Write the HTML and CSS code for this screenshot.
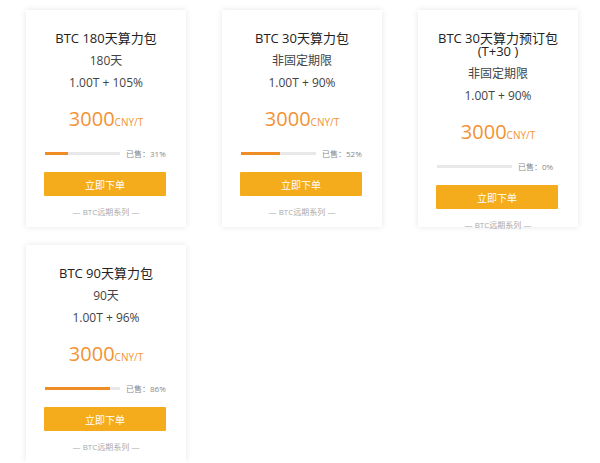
FILE: index.html
```html
<!DOCTYPE html>
<html lang="zh-CN">
<head>
    <meta charset="UTF-8">
    <title>BTC 算力包</title>
    <link rel="stylesheet" href="styles.css">
</head>
<body>
    <div class="list">
        <div class="card">
            <h3 class="title">BTC 180天算力包</h3>
            <p class="sub">180天</p>
            <p class="sub">1.00T + 105%</p>
            <p class="price">3000<span>CNY/T</span></p>
            <div class="progress">
                <div class="track"><div class="fill" style="width: 31%"></div></div>
                <span class="sold">已售：31%</span>
            </div>
            <button class="buy">立即下单</button>
            <p class="series">— BTC远期系列 —</p>
        </div>

        <div class="card">
            <h3 class="title">BTC 30天算力包</h3>
            <p class="sub">非固定期限</p>
            <p class="sub">1.00T + 90%</p>
            <p class="price">3000<span>CNY/T</span></p>
            <div class="progress">
                <div class="track"><div class="fill" style="width: 52%"></div></div>
                <span class="sold">已售：52%</span>
            </div>
            <button class="buy">立即下单</button>
            <p class="series">— BTC远期系列 —</p>
        </div>

        <div class="card">
            <h3 class="title">BTC 30天算力预订包(T+30 )</h3>
            <p class="sub">非固定期限</p>
            <p class="sub">1.00T + 90%</p>
            <p class="price">3000<span>CNY/T</span></p>
            <div class="progress">
                <div class="track"><div class="fill" style="width: 0%"></div></div>
                <span class="sold">已售：0%</span>
            </div>
            <button class="buy">立即下单</button>
            <p class="series">— BTC远期系列 —</p>
        </div>

        <div class="card">
            <h3 class="title">BTC 90天算力包</h3>
            <p class="sub">90天</p>
            <p class="sub">1.00T + 96%</p>
            <p class="price">3000<span>CNY/T</span></p>
            <div class="progress">
                <div class="track"><div class="fill" style="width: 86%"></div></div>
                <span class="sold">已售：86%</span>
            </div>
            <button class="buy">立即下单</button>
            <p class="series">— BTC远期系列 —</p>
        </div>
    </div>
</body>
</html>
```

FILE: styles.css
```css
body {
    margin: 0;
    background: #fff;
    font-family: "Open Sans", "Noto Sans CJK SC", sans-serif;
    color: #333;
}

.list {
    display: flex;
    flex-wrap: wrap;
    gap: 18px 36px;
    padding: 10px 0 0 26px;
    width: 580px;
}

.card {
    width: 160px;
    height: 217px;
    box-sizing: border-box;
    padding: 22px 19px 0;
    background: #fff;
    box-shadow: 0 0 6px rgba(0, 0, 0, 0.1);
    text-align: center;
}

.title {
    margin: 0 -10px;
    font-size: 13px;
    line-height: 13px;
    font-weight: normal;
    color: #222;
}

.sub {
    margin: 0;
    font-size: 12px;
    line-height: 22px;
    color: #444;
}

.sub:first-of-type {
    margin-top: 5px;
}

.price {
    height: 28px;
    margin: 11px 0 0;
    font-size: 20px;
    line-height: 28px;
    color: #f39233;
}

.price span {
    font-size: 10px;
}

.progress {
    display: flex;
    align-items: center;
    height: 12px;
    margin-top: 14px;
}

.track {
    width: 75px;
    height: 3px;
    background: #e8e8e8;
}

.fill {
    height: 100%;
    background: #f08c26;
}

.sold {
    margin-left: 6px;
    font-size: 8px;
    color: #888;
}

.buy {
    display: block;
    width: 122px;
    height: 24px;
    margin: 13px 0 0 -1px;
    padding: 0;
    border: none;
    border-radius: 1px;
    background: #f5ac1c;
    color: #fff;
    font-family: inherit;
    font-size: 10px;
    cursor: pointer;
}

.series {
    margin: 10px 0 0;
    font-size: 8px;
    line-height: 12px;
    color: #aaa;
}
```
